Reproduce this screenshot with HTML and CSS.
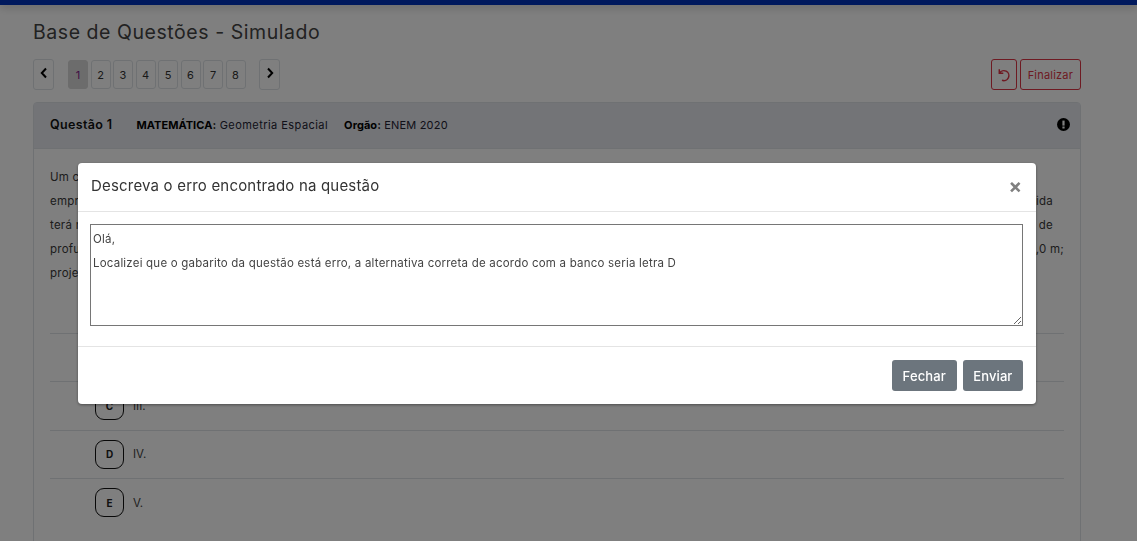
FILE: index.html
```html
<!DOCTYPE html>
<html lang="pt-BR">
<head>
<meta charset="utf-8">
<title>Base de Questões - Simulado</title>
<link rel="stylesheet" href="styles.css">
</head>
<body>
<div class="topbar"></div>
<main class="page">
  <h1 class="title">Base de Questões - Simulado</h1>
  <div class="toolbar">
    <div class="pager">
      <button class="nav-btn"><svg width="10" height="12" viewBox="0 0 10 12"><path d="M7 1.5 2.8 6 7 10.500" fill="none" stroke="#000" stroke-width="2"/></svg></button>
      <div class="pages">
        <button class="page-btn active">1</button>
        <button class="page-btn">2</button>
        <button class="page-btn">3</button>
        <button class="page-btn">4</button>
        <button class="page-btn">5</button>
        <button class="page-btn">6</button>
        <button class="page-btn">7</button>
        <button class="page-btn">8</button>
      </div>
      <button class="nav-btn"><svg width="10" height="12" viewBox="0 0 10 12"><path d="M3 1.500 7.200 6 3 10.500" fill="none" stroke="#000" stroke-width="2"/></svg></button>
    </div>
    <div class="actions">
      <button class="danger-btn icon-only"><svg width="14" height="14" viewBox="0 0 14 14"><path d="M2.300 1.300v4h4M2.500 5.200A5 5 0 1 1 5 12.300" fill="none" stroke="#dc3545" stroke-width="1.500"/></svg></button>
      <button class="danger-btn">Finalizar</button>
    </div>
  </div>
  <section class="card">
    <header class="card-head">
      <strong class="q-num">Questão 1</strong>
      <span class="meta"><b>MATEMÁTICA:</b> Geometria Espacial</span>
      <span class="meta"><b>Orgão:</b> ENEM 2020</span>
      <svg class="info" width="13" height="13" viewBox="0 0 13 13"><circle cx="6.500" cy="6.500" r="6.500" fill="#000"/><rect x="5.400" y="2.600" width="2.200" height="5" fill="#fff"/><rect x="5.400" y="8.500" width="2.200" height="2" fill="#fff"/></svg>
    </header>
    <div class="card-body">
      <div class="statement">
        <div class="line"><span>Um c</span></div>
        <div class="line end-1"><span>empr</span><span>ida</span></div>
        <div class="line end-1"><span>terá r</span><span>de</span></div>
        <div class="line"><span>profu</span><span>,0 m;</span></div>
        <div class="line"><span>proje</span></div>
      </div>
      <ul class="options">
        <li class="option"><span class="bubble">A</span><span>I.</span></li>
        <li class="option"><span class="bubble">B</span><span>II.</span></li>
        <li class="option"><span class="bubble">C</span><span>III.</span></li>
        <li class="option"><span class="bubble">D</span><span>IV.</span></li>
        <li class="option"><span class="bubble">E</span><span>V.</span></li>
      </ul>
    </div>
  </section>
</main>
<div class="backdrop"></div>
<div class="modal">
  <header class="modal-head">
    <h2 class="modal-title">Descreva o erro encontrado na questão</h2>
    <span class="close">×</span>
  </header>
  <div class="modal-body">
    <textarea class="field" spellcheck="false">Olá,
Localizei que o gabarito da questão está erro, a alternativa correta de acordo com a banco seria letra D</textarea>
  </div>
  <footer class="modal-foot">
    <button class="sec-btn">Fechar</button>
    <button class="sec-btn">Enviar</button>
  </footer>
</div>
</body>
</html>
```
FILE: styles.css
```css
* { box-sizing: border-box; }
html, body { height: 100%; }
body {
  margin: 0;
  overflow: hidden;
  background: #fff;
  color: #212529;
  font-family: "Inter", "Liberation Sans", sans-serif;
  font-size: 11px;
}
button { font-family: inherit; cursor: pointer; }
.topbar { height: 5px; background: #0033bb; box-shadow: 0 2px 8px rgba(0,0,0,.25); }
.page { padding: 0 56px 0 33px; }
.title { margin: 16px 0 0; font-size: 19.500px; line-height: 23px; font-weight: 400; color: #444; letter-spacing: .55px; white-space: nowrap; }
.toolbar { display: flex; justify-content: space-between; margin-top: 15px; height: 31px; }
.pager { display: flex; align-items: flex-start; }
.nav-btn {
  width: 21px; height: 31px; padding: 0 0 3px;
  background: #fff; border: 1px solid #dee2e6; border-radius: 3px;
  display: flex; align-items: center; justify-content: center;
}
.pages { display: flex; gap: 2.500px; margin: 1px 13.500px 0 14px; }
.page-btn {
  width: 20px; height: 29px; padding: 0;
  background: #fff; border: 1px solid #dee2e6; border-radius: 3px;
  color: #333; font-size: 11px;
}
.page-btn.active { background: #d8d8d8; border-color: #d8d8d8; color: #80208a; }
.actions { display: flex; gap: 3px; }
.danger-btn {
  height: 31px; padding: 0 7px;
  background: #fff; border: 1px solid #dc3545; border-radius: 3px;
  color: #dc3545; font-size: 11px; letter-spacing: .2px;
}
.icon-only { width: 26px; padding: 0; display: flex; align-items: center; justify-content: center; }
.card { margin-top: 12px; border: 1px solid #dee2e6; border-radius: 4px 4px 0 0; height: 500px; }
.card-head {
  height: 46px; padding: 0 10px 2px 16px;
  display: flex; align-items: center;
  background: #e6e9ee; border-bottom: 1px solid #dee2e6;
}
.q-num { font-size: 12.500px; font-weight: 600; color: #111; letter-spacing: .35px; margin-right: 24px; white-space: nowrap; }
.meta { font-size: 11px; color: #223; margin-right: 16px; letter-spacing: .45px; white-space: nowrap; }
.meta b { font-weight: 700; color: #000; letter-spacing: .05px; }
.meta + .meta { letter-spacing: .2px; }
.info { margin-left: auto; }
.card-body { padding: 16px 16px 0; }
.line { display: flex; justify-content: space-between; height: 24px; line-height: 24px; font-size: 11.500px; color: #3a3a3a; letter-spacing: .25px; }
.end-1 { padding-right: 11px; }
.options { list-style: none; margin: -1px 0 0; padding: 0; }
.option {
  height: 48.500px; display: flex; align-items: center; gap: 9px;
  padding-left: 45px; border-top: 1px solid #dee2e6;
  font-size: 11.500px; color: #444;
}
.option:first-child { border-top: 0; }
.bubble {
  width: 29px; height: 29px; display: flex; align-items: center; justify-content: center;
  border: 1.500px solid #111; border-radius: 9px;
  font-size: 10px; font-weight: 700; color: #222;
}
.backdrop { position: fixed; inset: 0; background: rgba(0,0,0,.5); }
.modal {
  position: fixed; left: 78px; top: 163px; width: 958px;
  background: #fff; border-radius: 4px;
  box-shadow: 0 1px 3px rgba(0,0,0,.4);
}
.modal-head {
  height: 49px; padding: 0 14px 3px 13px;
  display: flex; align-items: center; justify-content: space-between;
  border-bottom: 1px solid #e4e4e4;
}
.modal-title { margin: 0; font-size: 15px; font-weight: 400; color: #333; letter-spacing: .19px; }
.close { font-size: 20px; font-weight: 700; color: #808080; line-height: 1; }
.modal-body { padding: 12px 13px 0 12px; height: 135px; border-bottom: 1px solid #e4e4e4; }
.field {
  display: block; width: 100%; height: 102px; padding: 2px;
  border: 1px solid #767676; border-radius: 0; outline: 0;
  font-family: inherit; font-size: 11.500px; letter-spacing: .21px; line-height: 24px; color: #444;
}
.modal-foot { height: 57px; padding: 13px 13px 0 0; display: flex; justify-content: flex-end; gap: 6px; }
.sec-btn {
  height: 31px; padding: 0 10.500px; background: #6c757d; border: 0; border-radius: 3px;
  color: #fff; font-size: 13px; font-weight: 500; letter-spacing: .1px;
}
.sec-btn:first-child { padding: 0 11px; }
```
